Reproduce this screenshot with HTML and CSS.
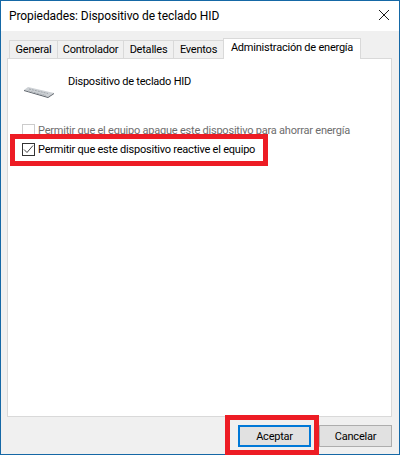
FILE: index.html
```html
<!DOCTYPE html>
<html lang="es">
<head>
<meta charset="utf-8">
<title>Propiedades: Dispositivo de teclado HID</title>
<link rel="stylesheet" href="styles.css">
</head>
<body>
<div class="window">
  <header class="titlebar">
    <span class="title">Propiedades: Dispositivo de teclado HID</span>
    <svg class="close" width="12" height="12" viewBox="0 0 12 12"><path d="M1 1l10 10M11 1L1 11" stroke="#1a1a1a" stroke-width="1" fill="none"/></svg>
  </header>
  <div class="client">
    <nav class="tabs">
      <div class="tab t1">General</div>
      <div class="tab t2">Controlador</div>
      <div class="tab t3">Detalles</div>
      <div class="tab t4">Eventos</div>
      <div class="tab active">Administración de energía</div>
    </nav>
    <section class="panel">
      <div class="device">
        <svg class="kbd" width="32" height="12" viewBox="0 0 32 12">
          <path d="M1 4 L5 1 L31 7 L25 11 Z" fill="#cdd1d5"/>
          <path d="M1 4 L25 11 L31 7 L31 8 L25 12 L1 5 Z" fill="#5a6068"/>
          <path d="M6 3 L25 7.5 M5 5 L23 9.5" stroke="#a4a9ae" stroke-width="1" stroke-dasharray="2 1" fill="none"/>
        </svg>
        <span class="devname">Dispositivo de teclado HID</span>
      </div>
      <label class="opt disabled"><span class="box"></span><span>Permitir que el equipo apague este dispositivo para ahorrar energía</span></label>
      <label class="opt"><span class="box on"><svg width="11" height="11" viewBox="0 0 11 11"><path d="M1 5.5 L4 8.5 L10 1.5" stroke="#444" stroke-width="1" fill="none"/></svg></span><span>Permitir que este dispositivo reactive el equipo</span></label>
    </section>
    <footer class="buttons">
      <button class="btn default">Aceptar</button>
      <button class="btn">Cancelar</button>
    </footer>
  </div>
  <div class="mark mark-opt"></div>
  <div class="mark mark-btn"></div>
</div>
</body>
</html>
```
FILE: styles.css
```css
* { box-sizing: border-box; }
html, body { margin: 0; padding: 0; }
body { width: 400px; height: 455px; overflow: hidden; font-family: Roboto, "Noto Sans", sans-serif; font-size: 11px; letter-spacing: -0.22px; color: #000; }
.window { position: relative; width: 400px; height: 455px; border: 1px solid #1568a6; display: flex; flex-direction: column; background: #f0f0f0; }
.titlebar { height: 30px; flex: none; background: #fff; display: flex; align-items: center; justify-content: space-between; padding: 0 9px 0 8px; }
.title { font-size: 12px; letter-spacing: -0.08px; }
.close { display: block; margin-bottom: 2px; }
.client { flex: 1; display: flex; flex-direction: column; padding: 6px 7px 0 6px; }
.tabs { display: flex; height: 21px; padding-left: 2px; align-items: flex-end; position: relative; z-index: 1; flex: none; }
.tab { height: 18px; background: #f0f0f0; border: 1px solid #d9d9d9; border-bottom: none; margin-right: -1px; display: flex; align-items: center; justify-content: center; padding-bottom: 1px; white-space: nowrap; }
.t1 { width: 49px; }
.t2 { width: 67px; }
.t3 { width: 51px; }
.t4 { width: 51px; }
.tab.active { width: 138px; background: #fff; margin-bottom: -1px; height: 21px; padding-bottom: 3px; }
.panel { height: 359px; flex: none; background: #fff; border: 1px solid #d9d9d9; padding: 13px 14px 0 14px; display: flex; flex-direction: column; }
.device { display: flex; align-items: flex-start; height: 49px; }
.kbd { margin: 14px 13px 0 1px; flex: none; }
.devname { margin-top: 3px; }
.opt { display: flex; align-items: center; height: 19px; gap: 3px; white-space: nowrap; }
.opt.disabled { color: #6d6d6d; }
.box { width: 13px; height: 13px; border: 1px solid #333; display: flex; align-items: center; justify-content: center; flex: none; background: #fff; }
.disabled .box { border-color: #ccc; }
.buttons { display: flex; justify-content: flex-end; gap: 8px; padding: 8px 0 0 0; }
.btn { width: 73px; height: 22px; font: inherit; letter-spacing: inherit; color: #000; background: #e1e1e1; border: 1px solid #adadad; padding: 0; }
.btn.default { border: 2px solid #0078d7; }
.mark { position: absolute; border: 5px solid #ed1c24; }
.mark-opt { left: 9px; top: 133px; width: 258px; height: 32px; }
.mark-btn { left: 224px; top: 414px; width: 94px; height: 40px; }
```
